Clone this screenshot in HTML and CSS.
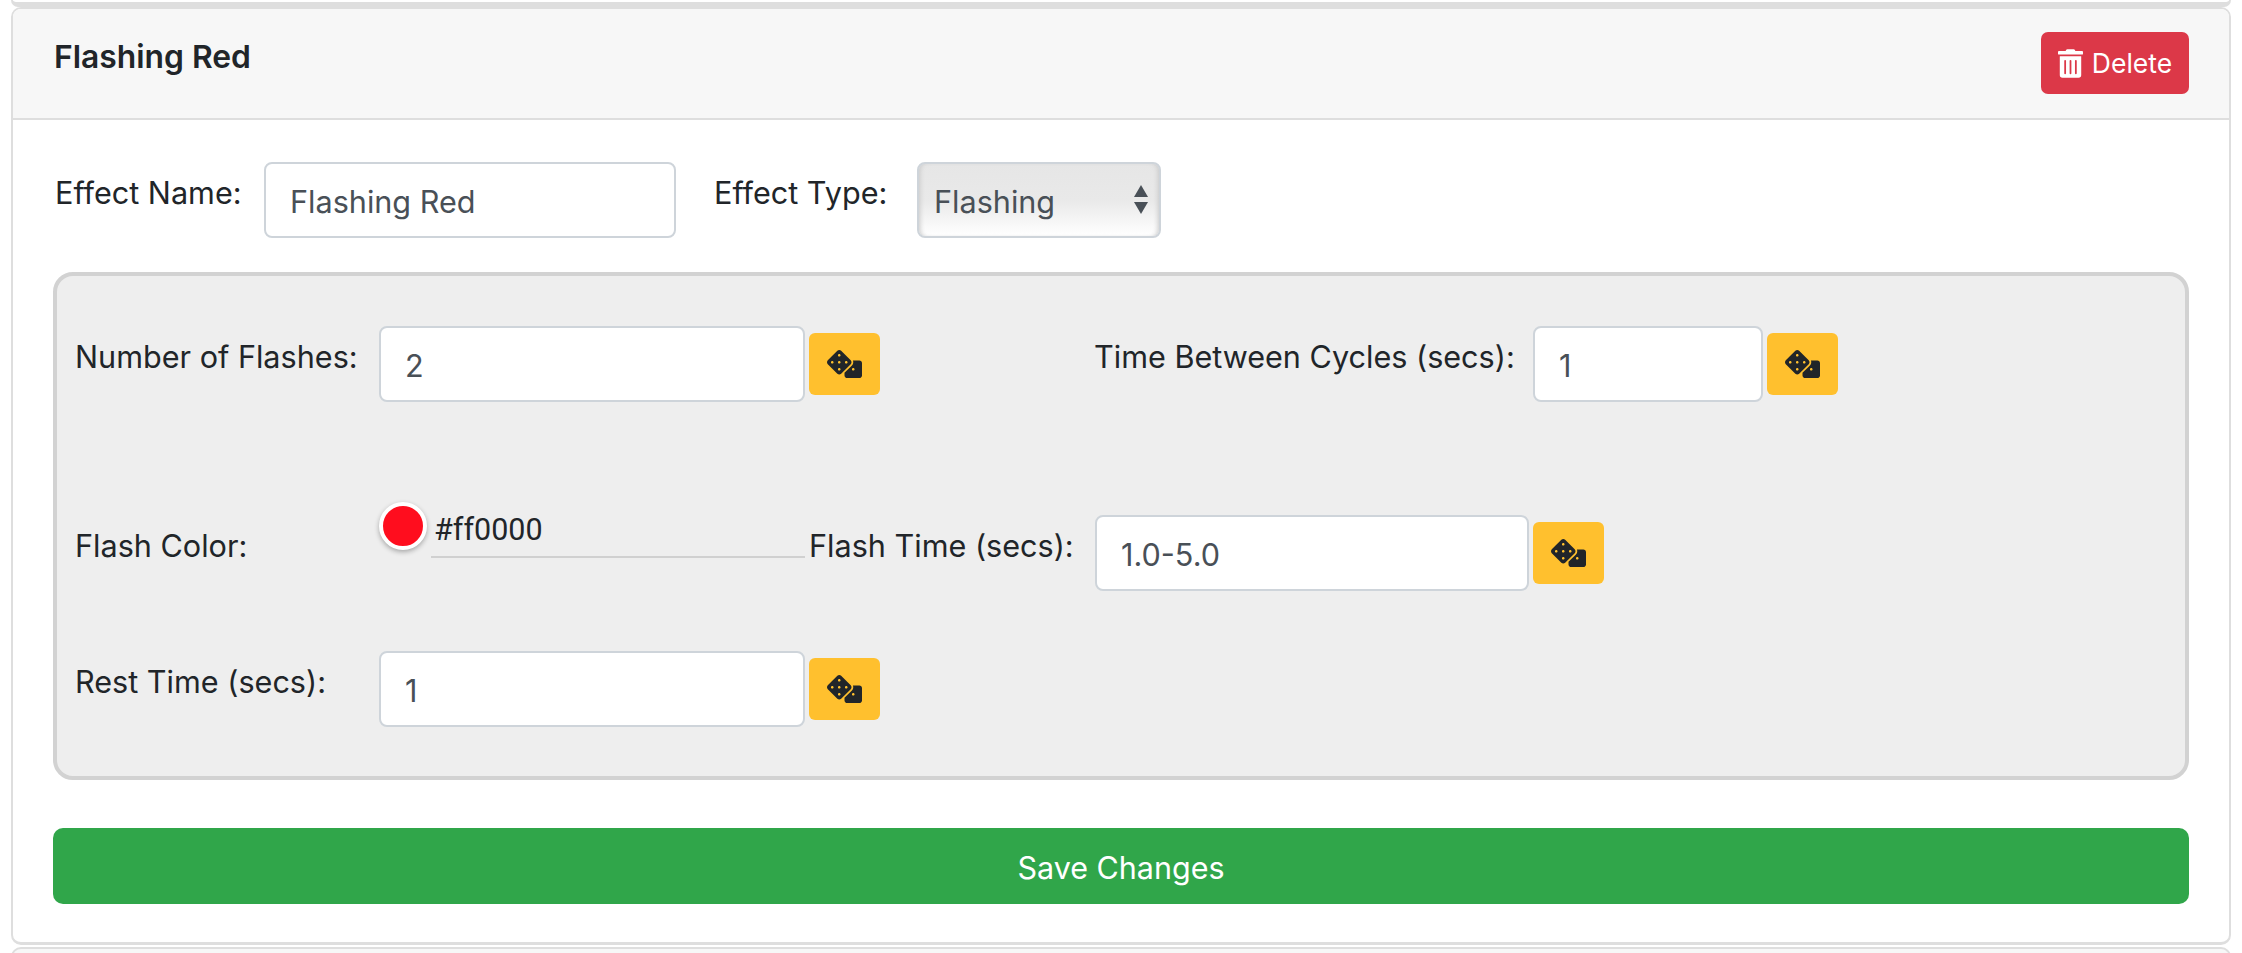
FILE: index.html
```html
<!DOCTYPE html>
<html lang="en">
<head>
<meta charset="utf-8">
<title>Flashing Red</title>
<link rel="stylesheet" href="styles.css">
</head>
<body>
<svg class="defs" aria-hidden="true">
  <symbol id="dice" viewBox="0 0 640 512"><path d="M592 192H473.26c12.69 29.59 7.12 65.2-17 89.32L320 417.58V464c0 26.51 21.49 48 48 48h224c26.51 0 48-21.49 48-48V240c0-26.51-21.49-48-48-48zM480 376c-13.25 0-24-10.75-24-24 0-13.26 10.75-24 24-24s24 10.74 24 24c0 13.25-10.75 24-24 24zm-46.37-186.7L258.7 14.37c-19.16-19.16-50.23-19.16-69.39 0L14.37 189.3c-19.16 19.16-19.16 50.23 0 69.39L189.3 433.63c19.16 19.16 50.23 19.16 69.39 0L433.63 258.7c19.16-19.17 19.16-50.24 0-69.4zM96 248c-13.25 0-24-10.75-24-24 0-13.26 10.75-24 24-24s24 10.74 24 24c0 13.25-10.75 24-24 24zm128 128c-13.25 0-24-10.75-24-24 0-13.26 10.75-24 24-24s24 10.74 24 24c0 13.25-10.75 24-24 24zm0-128c-13.25 0-24-10.75-24-24 0-13.26 10.75-24 24-24s24 10.74 24 24c0 13.25-10.75 24-24 24zm0-128c-13.25 0-24-10.75-24-24 0-13.26 10.75-24 24-24s24 10.74 24 24c0 13.25-10.75 24-24 24zm128 128c-13.25 0-24-10.75-24-24 0-13.26 10.75-24 24-24s24 10.74 24 24c0 13.25-10.75 24-24 24z"/></symbol>
</svg>
<div class="card-stub card-prev"></div>
<section class="card">
  <header class="card-header">
    <h5 class="card-title">Flashing Red</h5>
    <button class="btn-delete" type="button">
      <svg class="icon-trash" viewBox="0 0 448 512"><path d="M32 464a48 48 0 0 0 48 48h288a48 48 0 0 0 48-48V128H32zm272-256a16 16 0 0 1 32 0v224a16 16 0 0 1-32 0zm-96 0a16 16 0 0 1 32 0v224a16 16 0 0 1-32 0zm-96 0a16 16 0 0 1 32 0v224a16 16 0 0 1-32 0zM432 32H312l-9.4-18.7A24 24 0 0 0 281.1 0H166.8a23.72 23.72 0 0 0-21.3 13.3L136 32H16A16 16 0 0 0 0 48v32a16 16 0 0 0 16 16h416a16 16 0 0 0 16-16V48a16 16 0 0 0-16-16z"/></svg>
      <span>Delete</span>
    </button>
  </header>
  <div class="card-body">
    <div class="top-row">
      <label class="label label-name">Effect Name:</label>
      <input class="field field-name" type="text" value="Flashing Red">
      <label class="label label-type">Effect Type:</label>
      <div class="select-wrap">
        <select class="select"><option>Flashing</option></select>
        <span class="arrows"><i class="arrow-up"></i><i class="arrow-down"></i></span>
      </div>
    </div>
    <div class="panel">
      <div class="row row-1">
        <label class="label col-label">Number of Flashes:</label>
        <input class="field col-input" type="text" value="2">
        <button class="btn-dice" type="button"><svg class="icon-dice"><use href="#dice"/></svg></button>
        <label class="label label-cycles">Time Between Cycles (secs):</label>
        <input class="field field-cycles" type="text" value="1">
        <button class="btn-dice" type="button"><svg class="icon-dice"><use href="#dice"/></svg></button>
      </div>
      <div class="row row-2">
        <label class="label col-label label-color">Flash Color:</label>
        <div class="color-picker">
          <span class="swatch"></span>
          <span class="color-value">#ff0000</span>
        </div>
        <label class="label label-time">Flash Time (secs):</label>
        <input class="field field-time" type="text" value="1.0-5.0">
        <button class="btn-dice" type="button"><svg class="icon-dice"><use href="#dice"/></svg></button>
      </div>
      <div class="row row-3">
        <label class="label col-label">Rest Time (secs):</label>
        <input class="field col-input" type="text" value="1">
        <button class="btn-dice" type="button"><svg class="icon-dice"><use href="#dice"/></svg></button>
      </div>
    </div>
    <button class="btn-save" type="button">Save Changes</button>
  </div>
</section>
<div class="card-stub card-next"></div>
</body>
</html>
```
FILE: styles.css
```css
* { box-sizing: border-box; }
html, body { margin: 0; height: 953px; overflow: hidden; background: #fff; }
body {
  padding: 0 11px;
  font-family: Inter, "Liberation Sans", sans-serif;
  color: #212529;
}
.defs { display: none; }
.card-stub { width: 2220px; border: 2px solid #dedede; }
.card-prev { height: 7px; border-top: 0; border-bottom-width: 5px; border-radius: 0 0 10px 10px; }
.card-next { height: 30px; margin-top: 2px; border-radius: 10px 10px 0 0; border-bottom: 0; background: #f7f7f7; }
.card {
  width: 2220px;
  height: 938px;
  border: 2px solid #dedede;
  border-bottom-width: 3px;
  border-radius: 10px;
  background: #fff;
}
.card-header {
  height: 111px;
  padding: 23px 40px 0 41px;
  display: flex;
  justify-content: space-between;
  align-items: flex-start;
  background: #f7f7f7;
  border-bottom: 2px solid #dedede;
  border-radius: 8px 8px 0 0;
}
.card-title { margin: 5px 0 0; font-size: 31.8px; line-height: 40px; font-weight: 600; }
.btn-delete {
  width: 148px;
  height: 62px;
  padding: 0;
  display: flex;
  align-items: center;
  justify-content: center;
  gap: 9px;
  border: 0;
  border-radius: 7px;
  background: #dc3848;
  color: #fff;
  font: 400 26.5px Inter, "Liberation Sans", sans-serif;
}
.icon-trash { width: 25px; height: 29px; fill: #fff; }
.card-body { padding: 42px 40px 0 40px; }
.top-row { display: flex; align-items: flex-start; height: 110px; }
.label { font-size: 30.6px; line-height: 44px; padding-top: 9px; flex: none; }
.label-name { width: 211px; padding-left: 2px; }
.field {
  flex: none;
  height: 76px;
  padding: 2px 24px 0;
  border: 2px solid #ced4da;
  border-radius: 8px;
  background: #fff;
  color: #495057;
  font: 400 30.6px Inter, "Liberation Sans", sans-serif;
  outline: none;
}
.field-name { width: 412px; }
.label-type { margin-left: 38px; width: 203px; }
.select-wrap { position: relative; width: 244px; height: 76px; flex: none; }
.select {
  appearance: none;
  width: 100%;
  height: 100%;
  padding: 2px 0 0 15px;
  border: 2px solid #ced4da;
  border-radius: 8px;
  background: linear-gradient(#e6e6e6 0%, #e9e9e9 50%, #ffffff 100%);
  box-shadow: inset 4px 0 5px -3px #c8c8c8, inset -4px 0 5px -3px #c8c8c8;
  color: #495057;
  font: 400 30.6px Inter, "Liberation Sans", sans-serif;
}
.arrows {
  position: absolute;
  top: 23px;
  right: 13px;
  display: flex;
  flex-direction: column;
  gap: 5px;
  pointer-events: none;
}
.arrow-up, .arrow-down { display: block; width: 0; height: 0; border-left: 7px solid transparent; border-right: 7px solid transparent; }
.arrow-up { border-bottom: 12px solid #495057; }
.arrow-down { border-top: 12px solid #495057; }
.panel {
  height: 508px;
  padding: 50px 19px 0 16px;
  border: 4px solid #d2d2d2;
  border-radius: 20px;
  background: #eee;
}
.row { display: flex; align-items: flex-start; }
.row-1 { height: 189px; }
.row-2 { height: 136px; }
.col-label { width: 306px; padding-left: 2px; }
.col-input { width: 426px; }
.btn-dice {
  flex: none;
  width: 71px;
  height: 62px;
  margin: 7px 0 0 4px;
  padding: 0;
  display: flex;
  align-items: center;
  justify-content: center;
  border: 0;
  border-radius: 6px;
  background: #ffc02e;
}
.icon-dice { width: 35px; height: 28px; fill: #212529; }
.label-cycles { margin-left: 214px; width: 439px; }
.field-cycles { width: 230px; }
.color-picker {
  width: 426px;
  height: 76px;
  flex: none;
  display: flex;
  align-items: flex-start;
  margin-top: -13px;
}
.swatch {
  flex: none;
  width: 48px;
  height: 48px;
  border: 4px solid #fff;
  border-radius: 50%;
  background: #ff0d1e;
  box-shadow: 0 2px 5px rgba(0, 0, 0, .3);
}
.color-value {
  flex: 1;
  height: 56px;
  margin-left: 4px;
  padding: 6px 0 0 3px;
  border-bottom: 2px solid #d0d0d0;
  font-family: Roboto, "Liberation Sans", sans-serif;
  font-size: 30.5px;
  line-height: 44px;
  color: #212529;
}
.label-color { padding-top: 9px; }
.label-time { width: 286px; margin-left: 4px; }
.field-time { width: 434px; }
.btn-save {
  display: block;
  width: 100%;
  height: 76px;
  margin-top: 48px;
  padding: 2px 0 0;
  border: 0;
  border-radius: 10px;
  background: #30a64a;
  color: #fff;
  font: 400 30.5px Inter, "Liberation Sans", sans-serif;
}
```
